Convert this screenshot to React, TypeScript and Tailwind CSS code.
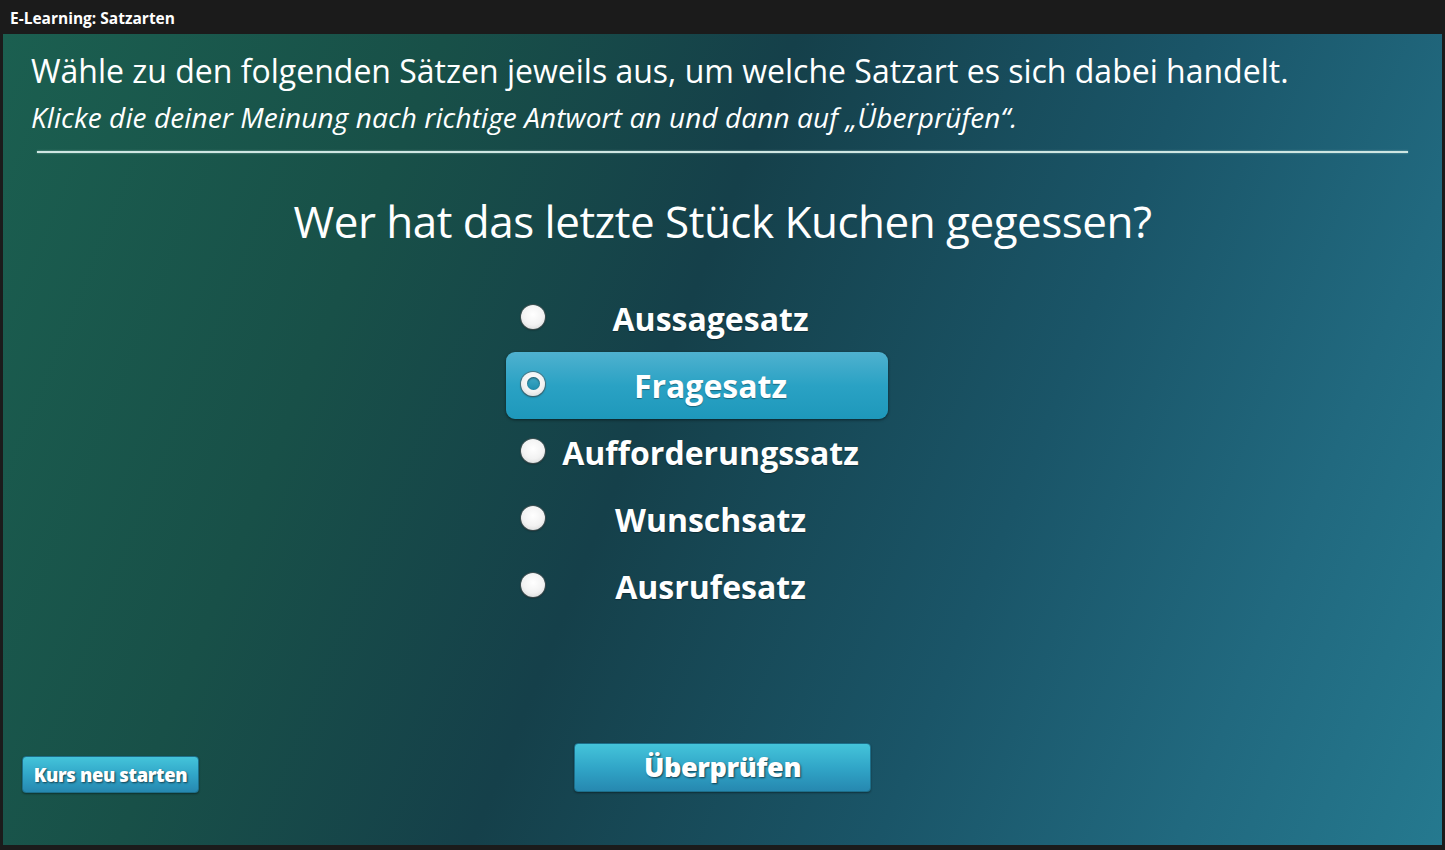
import React, { useState } from "react";

const options = ["Aussagesatz", "Fragesatz", "Aufforderungssatz", "Wunschsatz", "Ausrufesatz"];

function Radio({ checked }: { checked: boolean }) {
  return (
    <span className="relative flex h-[24px] w-[24px] shrink-0 items-center justify-center rounded-full bg-[radial-gradient(circle_at_50%_40%,#ffffff_0%,#f2f2f2_55%,#cfcfcf_100%)] shadow-[0_0_0_1px_rgba(90,90,90,0.6),0_1px_2px_rgba(0,0,0,0.5)]">
      {checked && (
        <span className="h-[13px] w-[13px] rounded-full bg-[linear-gradient(180deg,#3fa9c6_0%,#1f8fb0_100%)] shadow-[inset_0_1px_2px_rgba(0,0,0,0.5)]" />
      )}
    </span>
  );
}

export default function App() {
  const [selected, setSelected] = useState(1);
  const font = { fontFamily: '"Open Sans", "Noto Sans", sans-serif' };
  return (
    <div className="flex h-[850px] w-[1445px] flex-col overflow-hidden bg-[#1b1b1b]" style={font}>
      <div className="flex h-[34px] shrink-0 items-center px-[10px] pt-[3px] text-[15.5px] font-bold text-white">
        E-Learning: Satzarten
      </div>
      <div className="mx-[3px] mb-[5px] flex flex-1 flex-col bg-[linear-gradient(112deg,#1b5f50_0%,#185048_25%,#15404a_45%,#1a5568_68%,#21697f_85%,#25798f_100%)]">
        <div className="px-[28px] pt-[15px]">
          <h1 className="text-[32px] leading-[44px] text-white">
            Wähle zu den folgenden Sätzen jeweils aus, um welche Satzart es sich dabei handelt.
          </h1>
          <p className="mt-[6px] text-[28px] italic leading-[36px] tracking-[0.1px] text-white">
            Klicke die deiner Meinung nach richtige Antwort an und dann auf „Überprüfen“.
          </p>
        </div>
        <div className="mx-[34px] mt-[16px] h-[2px] bg-[#cfe6e2] shadow-[0_0_2px_rgba(200,240,235,0.6)]" />
        <div className="mt-[38px] text-center text-[44px] leading-[60px] tracking-[-0.5px] text-white">
          Wer hat das letzte Stück Kuchen gegessen?
        </div>
        <div className="mt-[34px] flex justify-center">
          <div className="ml-[-51px] flex w-[382px] flex-col">
            {options.map((o, i) => {
              const sel = i === selected;
              return (
                <button
                  key={o}
                  onClick={() => setSelected(i)}
                  className={
                    "flex h-[67px] items-center rounded-[9px] pl-[15px] pr-[12px] " +
                    (sel
                      ? "bg-[linear-gradient(180deg,#4fb1cf_0%,#2aa2c4_50%,#1e98bb_100%)] shadow-[0_1px_3px_rgba(0,0,0,0.5)]"
                      : "")
                  }
                >
                  <span className="-mt-[4px]">
                    <Radio checked={sel} />
                  </span>
                  <span className="flex-1 text-center text-[32px] font-bold text-white [text-shadow:0_1px_1px_rgba(0,0,0,0.35)]">
                    {o}
                  </span>
                </button>
              );
            })}
          </div>
        </div>
        <div className="flex-1" />
        <div className="mb-[52px] grid grid-cols-[1fr_auto_1fr] items-end px-[19px]">
          <div>
            <button className="h-[37px] w-[177px] rounded-[4px] border border-[#1d6f8a] bg-[linear-gradient(180deg,#44c4da_0%,#31a6c8_50%,#2688b0_100%)] text-[18.5px] font-extrabold tracking-[-0.4px] text-white [text-shadow:1px_1px_2px_rgba(0,0,0,0.6)] shadow-[0_1px_2px_rgba(0,0,0,0.4)]">
              Kurs neu starten
            </button>
          </div>
          <button className="mb-[1px] h-[49px] w-[297px] rounded-[4px] border border-[#1d6f8a] bg-[linear-gradient(180deg,#44c4da_0%,#31a6c8_50%,#2688b0_100%)] text-[27px] font-extrabold tracking-[-0.4px] text-white [text-shadow:1px_1px_2px_rgba(0,0,0,0.6)] shadow-[0_1px_2px_rgba(0,0,0,0.4)]">
            Überprüfen
          </button>
          <div />
        </div>
      </div>
    </div>
  );
}
